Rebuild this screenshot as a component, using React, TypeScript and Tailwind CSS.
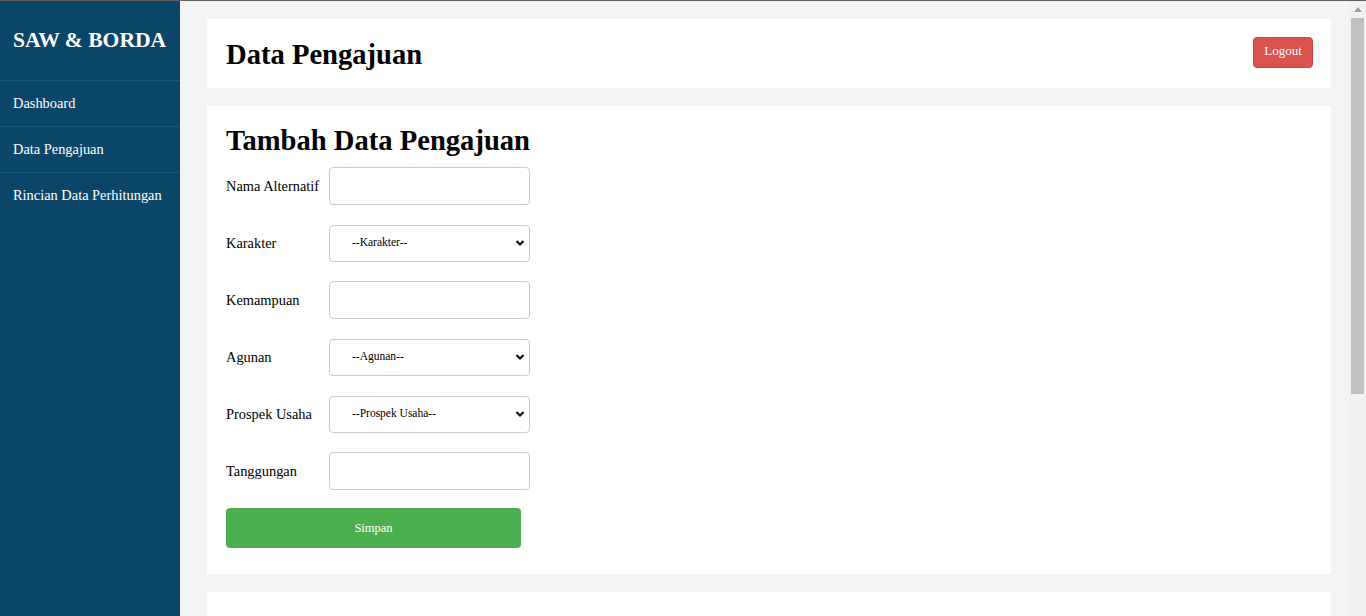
import React from "react";

const serif = "font-['Liberation_Serif','Times_New_Roman',serif]";

type Field = { label: string; kind: "input" | "select"; placeholder?: string };

const fields: Field[] = [
  { label: "Nama Alternatif", kind: "input" },
  { label: "Karakter", kind: "select", placeholder: "--Karakter--" },
  { label: "Kemampuan", kind: "input" },
  { label: "Agunan", kind: "select", placeholder: "--Agunan--" },
  { label: "Prospek Usaha", kind: "select", placeholder: "--Prospek Usaha--" },
  { label: "Tanggungan", kind: "input" },
];

const menu = ["Dashboard", "Data Pengajuan", "Rincian Data Perhitungan"];

function Chevron() {
  return (
    <svg
      className="pointer-events-none absolute right-[5px] top-1/2 -translate-y-1/2"
      width="10"
      height="7"
      viewBox="0 0 10 7"
    >
      <polyline points="1.5,1.5 5,5 8.5,1.5" fill="none" stroke="#111" strokeWidth="2.2" />
    </svg>
  );
}

function FormRow({ field }: { field: Field }) {
  return (
    <div className="flex items-center h-[38px] mb-[19px]">
      <label className="w-[103px] shrink-0 pt-px text-[14.4px] text-black">{field.label}</label>
      {field.kind === "input" ? (
        <input
          type="text"
          className="w-[201px] h-[38px] rounded-[4px] border border-[#cccccc] bg-white px-[10px] outline-none"
        />
      ) : (
        <div className="relative w-[201px] h-[37px]">
          <select
            defaultValue=""
            className={`${serif} appearance-none w-full h-full rounded-[4px] border border-[#cccccc] bg-white pl-[22px] text-[11.5px] text-black outline-none`}
          >
            <option value="">{field.placeholder}</option>
          </select>
          <Chevron />
        </div>
      )}
    </div>
  );
}

export default function App() {
  return (
    <div className={`${serif} h-[616px] flex flex-col overflow-hidden bg-[#f3f4f6]`}>
      <div className="h-px bg-[#5f5f5f] shrink-0" />
      <div className="flex flex-1 min-h-0">
        <aside className="w-[180px] shrink-0 bg-[#0b4668] text-white">
          <div className="h-[79px] flex items-center pl-[13px]">
            <h1 className="text-[21.6px] font-bold">SAW &amp; BORDA</h1>
          </div>
          {menu.map((m) => (
            <div
              key={m}
              className="h-[46px] flex items-center pl-[13px] border-t border-[#1b5678] text-[14.4px]"
            >
              {m}
            </div>
          ))}
        </aside>

        <main className="flex-1 min-w-0 pl-[27px] pr-[18px] pt-[18px] flex flex-col gap-[18px]">
          <div className="bg-white h-[69px] shrink-0 flex items-center justify-between pl-[19px] pr-[18px]">
            <h2 className="pt-[3px] text-[28.6px] font-bold text-black">Data Pengajuan</h2>
            <button
              type="button"
              className="mb-[2px] pb-[3px] w-[60px] h-[31px] rounded-[4px] bg-[#d9534f] border border-[#d43f3a] text-white text-[13px]"
            >
              Logout
            </button>
          </div>

          <div className="bg-white shrink-0 pl-[19px] pt-[18px] pb-[26px]">
            <h2 className="text-[28.6px] font-bold text-black leading-[33px] mb-[10px]">
              Tambah Data Pengajuan
            </h2>
            {fields.map((f) => (
              <FormRow key={f.label} field={f} />
            ))}
            <button
              type="button"
              className="-mt-px w-[295px] h-[40px] rounded-[4px] bg-[#4caf50] text-white text-[12.5px]"
            >
              Simpan
            </button>
          </div>

          <div className="bg-white h-[200px] shrink-0" />
        </main>

        <div className="w-[17px] shrink-0 bg-[#f1f1f1] flex flex-col items-center">
          <div className="h-[17px] flex items-center justify-center">
            <svg width="8" height="5" viewBox="0 0 8 5">
              <polygon points="0,5 4,0 8,5" fill="#a3a3a3" />
            </svg>
          </div>
          <div className="w-[13px] h-[376px] bg-[#c1c1c1]" />
        </div>
      </div>
    </div>
  );
}
